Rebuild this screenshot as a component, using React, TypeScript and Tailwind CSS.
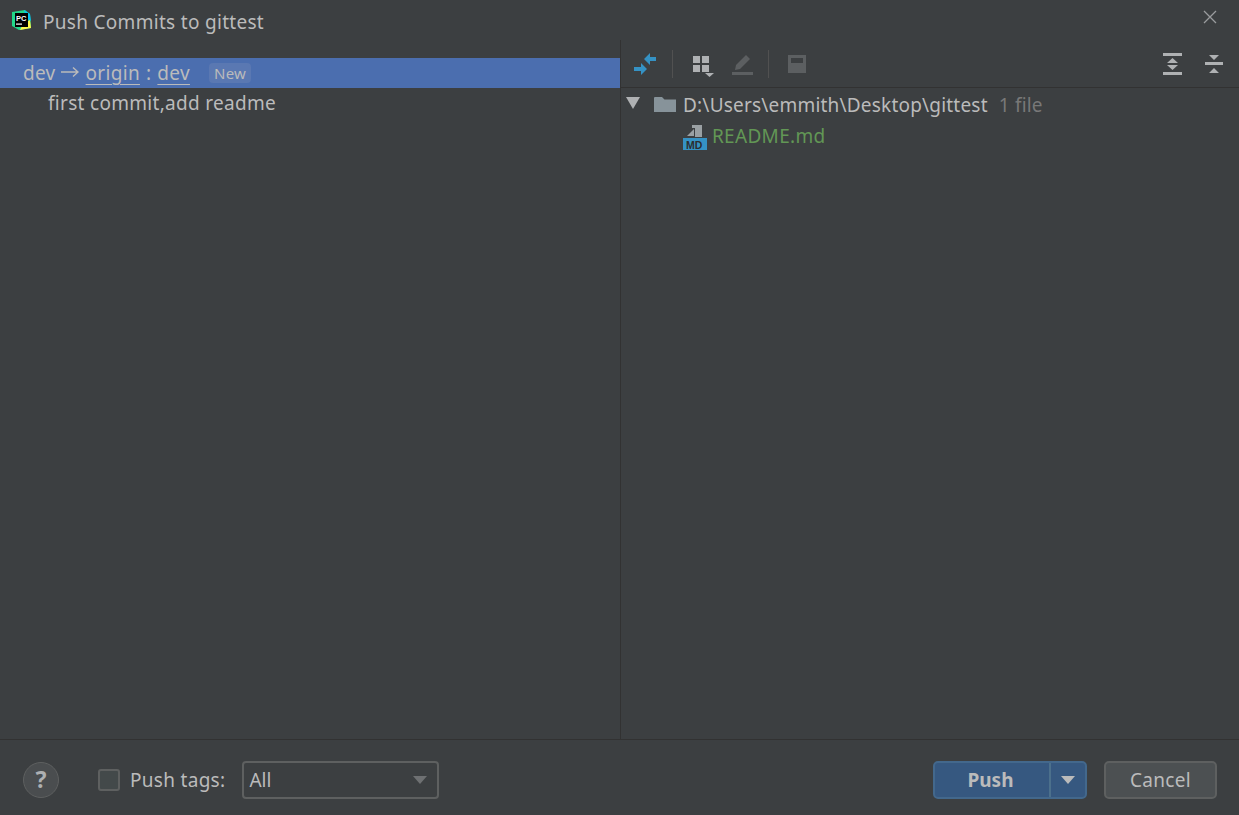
import React from 'react';

const font = { fontFamily: '"Noto Sans", "Open Sans", sans-serif' };

function AppLogo() {
  return (
    <svg width="22" height="22" viewBox="0 0 22 22">
      <path d="M2 3 L15 1 L20 5 L21 19 L9 21 L2 17 Z" fill="#21d789" />
      <path d="M14 1 L20 5 L21 12 L16 9 Z" fill="#07c3f2" />
      <path d="M20 11 L21 19 L10 21 L13 15 Z" fill="#fcf84a" />
      <rect x="5" y="4" width="13" height="14" fill="#000" />
      <text x="6" y="11.5" fill="#fff" fontSize="7.5" fontWeight="700" fontFamily="Liberation Sans">PC</text>
      <rect x="6" y="14.5" width="6" height="1.2" fill="#fff" />
    </svg>
  );
}

function Tree() {
  return (
    <div className="flex flex-col">
      <div className="flex items-center h-[33px] pl-[5px]">
        <svg width="14" height="12" viewBox="0 0 14 12" className="mt-[-3px]"><path d="M0 0 H14 L7 12 Z" fill="#afb1b3" /></svg>
        <svg width="24" height="18" viewBox="0 0 24 18" className="ml-[13px] mt-[-1px]"><path d="M1 3 a1 1 0 0 1 1-1 h7 l2.5 2.5 H23 V17 H1 Z" fill="#87939a" /></svg>
        <span className="ml-[6px] mt-[1px] text-[19px] tracking-[0.2px] text-[#bbbbbb]">D:\Users\emmith\Desktop\gittest</span>
        <span className="ml-[11px] mt-[1px] text-[19px] tracking-[0.2px] text-[#787878]">1 file</span>
      </div>
      <div className="flex items-center h-[30px] pl-[62px]">
        <svg width="24" height="26" viewBox="0 0 24 26" className="mt-[2px]">
          <path d="M4 12 L11 5 V12 Z" fill="#9aa0a3" />
          <path d="M9 1 H19 V13 H12 V4 H9 Z" fill="#9aa0a3" />
          <rect x="0" y="14" width="24" height="12" fill="#3592c4" />
          <text x="3" y="24.5" fontSize="10.5" fontWeight="700" fill="#2b2d30" fontFamily="Liberation Sans">MD</text>
        </svg>
        <span className="ml-[5px] text-[19px] tracking-[0.3px] text-[#629755]">README.md</span>
      </div>
    </div>
  );
}

function Toolbar() {
  return (
    <div className="flex items-center h-[48px] border-b border-[#323232] pl-[13px] pr-[15px]">
      {/* collapse arrows */}
      <svg width="24" height="24" viewBox="0 0 24 24">
        <path d="M10 7 L16 1 V5 H22 V9 H16 V13 Z" fill="#3592c4" />
        <path d="M13 17 L7 11 V15 H0 V19 H7 V23 Z" fill="#3592c4" />
      </svg>
      <div className="w-px h-[28px] bg-[#515151] ml-[14px]" />
      <svg width="28" height="26" viewBox="0 0 28 26" className="ml-[14px]">
        <rect x="6" y="5" width="7" height="7" fill="#afb1b3" />
        <rect x="15" y="5" width="7" height="7" fill="#afb1b3" />
        <rect x="6" y="14" width="7" height="7" fill="#afb1b3" />
        <rect x="15" y="14" width="7" height="7" fill="#afb1b3" />
        <path d="M18 22 H27 L22.5 26 Z" fill="#afb1b3" />
      </svg>
      <svg width="24" height="24" viewBox="0 0 24 24" className="ml-[16px]">
        <path d="M1 20 H22 V23 H1 Z" fill="#5c5f61" />
        <path d="M4 18 L5 13 L15 3 L19 7 L9 17 Z" fill="#5c5f61" />
      </svg>
      <div className="w-px h-[28px] bg-[#515151] ml-[13px]" />
      <svg width="20" height="20" viewBox="0 0 20 20" className="ml-[18px]">
        <path d="M1 1 H19 V19 H1 Z M4 4 V9 H16 V4 Z" fill="#5c5f61" fillRule="evenodd" />
      </svg>
      <div className="flex-1" />
      <svg width="20" height="24" viewBox="0 0 20 24">
        <rect x="1" y="1" width="19" height="3" fill="#afb1b3" />
        <rect x="1" y="20" width="19" height="3" fill="#afb1b3" />
        <path d="M10.5 6 L16 11 H5 Z M5 13 H16 L10.5 18 Z" fill="#afb1b3" />
      </svg>
      <svg width="20" height="20" viewBox="0 0 20 20" className="ml-[22px]">
        <path d="M5 0 H15 L10 5 Z M5 18 H15 L10 13 Z" fill="#afb1b3" transform="translate(0 1)" />
        <rect x="1" y="8" width="18" height="3" fill="#afb1b3" />
      </svg>
    </div>
  );
}

function Footer() {
  return (
    <div className="flex items-center h-[76px] pt-[4px] border-t border-[#323232] pl-[23px] pr-[22px]">
      <div className="flex items-center justify-center w-[36px] h-[36px] rounded-full bg-[#4a4d4f] border border-[#5e6060] text-[23px] font-bold text-[#aeb0b2]">?</div>
      <div className="w-[22px] h-[22px] ml-[39px] rounded-[3px] bg-[#43494a] border-2 border-[#5e6060]" />
      <span className="ml-[10px] mt-[1px] text-[19px] tracking-[0.3px] text-[#bbbbbb]">Push tags:</span>
      <div className="flex items-center w-[197px] h-[38px] ml-[17px] pl-[5px] pr-[10px] rounded-[4px] border-2 border-[#5e6060] text-[19px] text-[#bbbbbb]">
        <span className="flex-1 mt-[1px]">All</span>
        <svg width="14" height="8" viewBox="0 0 14 8"><path d="M0 0 H14 L7 8 Z" fill="#6e7072" /></svg>
      </div>
      <div className="flex-1" />
      <div className="flex h-[38px] w-[154px] rounded-[5px] border-2 border-[#43688c] bg-[#365880] text-[19px] font-bold text-[#bbbbbb]">
        <span className="flex w-[114px] pr-[3px] mt-[1px] items-center justify-center">Push</span>
        <div className="flex flex-1 items-center justify-center border-l-2 border-[#4c708c]">
          <svg width="14" height="8" viewBox="0 0 14 8"><path d="M0 0 H14 L7 8 Z" fill="#bbbbbb" /></svg>
        </div>
      </div>
      <div className="flex items-center justify-center w-[113px] h-[38px] ml-[17px] rounded-[5px] border-2 border-[#5e6060] bg-[#4c5052] text-[19px] tracking-[0.3px] text-[#bbbbbb]">
        <span className="mt-[1px]">Cancel</span>
      </div>
    </div>
  );
}

export default function App() {
  return (
    <div className="flex flex-col w-[1239px] h-[815px] overflow-hidden bg-[#3c3f41]" style={font}>
      {/* Title bar */}
      <div className="flex items-center h-[40px] pl-[10px] pr-[21px] shrink-0">
        <AppLogo />
        <span className="ml-[11px] mt-[5px] text-[19px] tracking-[0.3px] text-[#bbbbbb]">Push Commits to gittest</span>
        <div className="flex-1" />
        <svg width="16" height="16" viewBox="0 0 16 16" className="mt-[-6px]">
          <path d="M2 2 L14 14 M14 2 L2 14" stroke="#9a9c9e" strokeWidth="1.3" />
        </svg>
      </div>

      {/* Body */}
      <div className="flex flex-1 min-h-0">
        <div className="w-[620px] pt-[18px]">
          <div className="flex items-center h-[30px] pl-[23px] bg-[#4b6eaf] text-[19px] tracking-[0.3px] text-[#bbbbbb]">
            <span>dev</span>
            <svg width="18" height="12" viewBox="0 0 18 12" className="ml-[5px] mr-[7px] mt-[-3px]">
              <path d="M0 6 H17 M12 1.5 L17 6 L12 10.5" fill="none" stroke="#bbbbbb" strokeWidth="1.4" />
            </svg>
            <span className="underline underline-offset-4">origin</span>
            <span className="mx-[6px]">:</span>
            <span className="underline underline-offset-4">dev</span>
            <span className="ml-[19px] px-[5px] rounded-[4px] bg-[#5a78b2] text-[15px] leading-[20px] text-[#bbbbbb]">New</span>
          </div>
          <div className="flex items-center h-[30px] pl-[48px] text-[19px] tracking-[0.3px] text-[#bbbbbb]">first commit,add readme</div>
        </div>
        <div className="flex flex-col flex-1 border-l border-[#323232]">
          <Toolbar />
          <Tree />
        </div>
      </div>

      <Footer />
    </div>
  );
}
